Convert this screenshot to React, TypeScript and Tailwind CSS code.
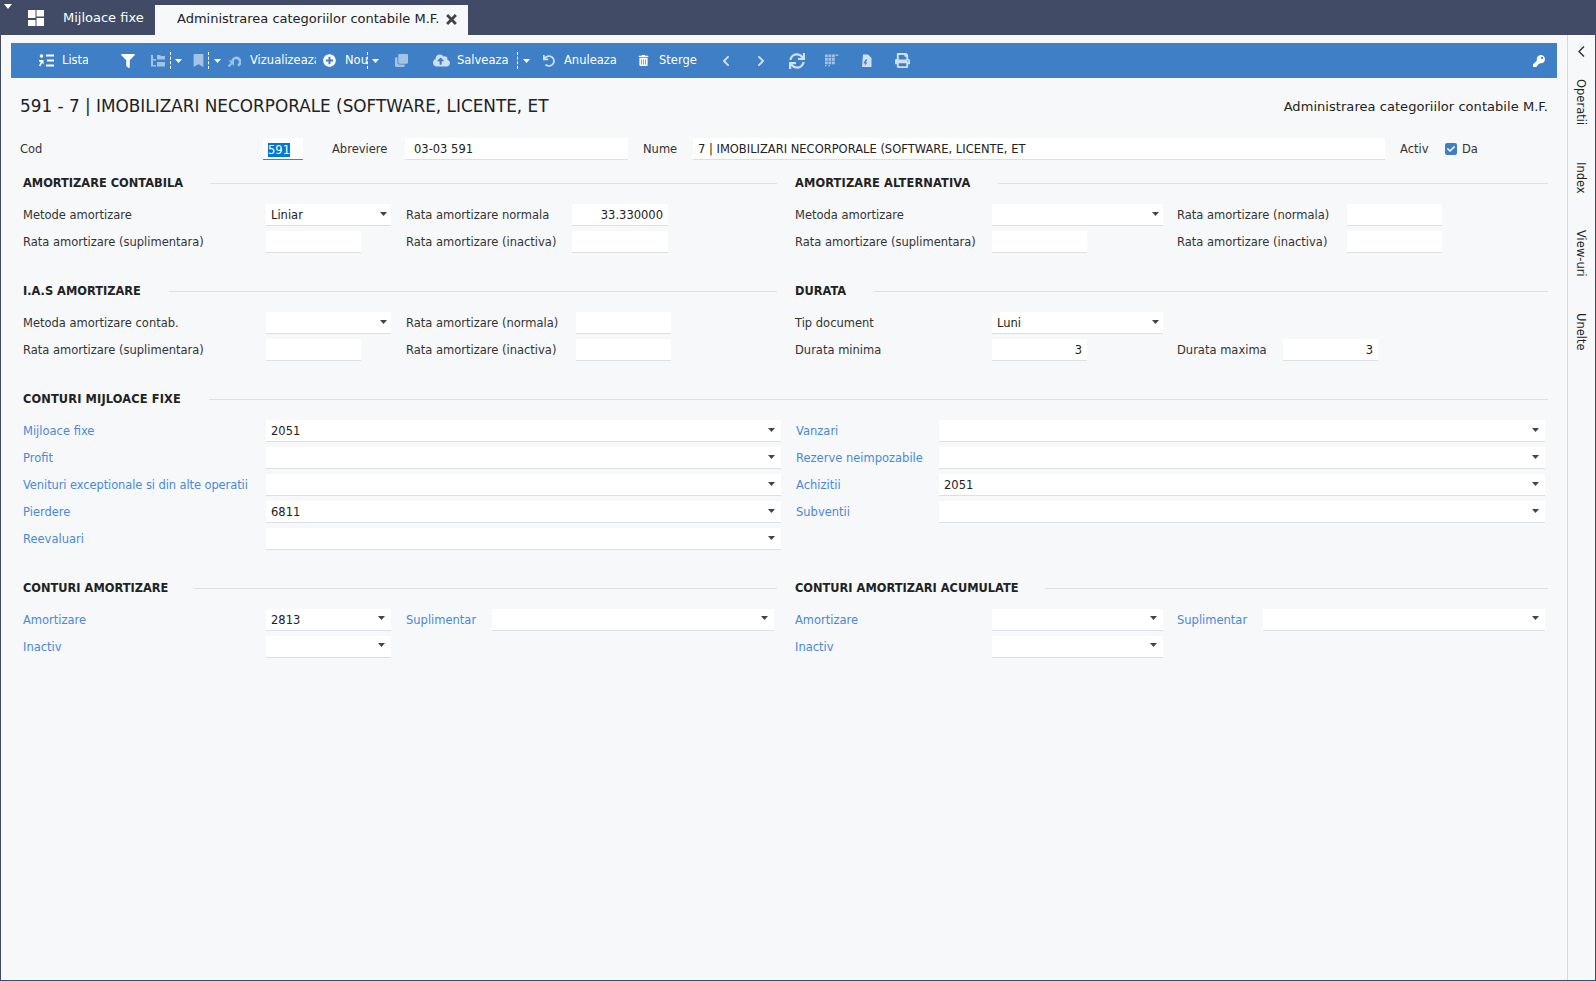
import React from "react";
import { FaFilter, FaBookmark, FaPlusCircle, FaClone, FaCloudUploadAlt, FaUndo, FaTrashAlt, FaChevronLeft, FaChevronRight, FaSync, FaPrint, FaKey, FaCheck } from "react-icons/fa";

const Caret = ({ className = "" }: { className?: string }) => (
  <svg width="7" height="4" viewBox="0 0 7 4" className={className}><path d="M0 0h7L3.5 4z" fill="currentColor" /></svg>
);

const Dash = () => <span className="h-[17px] w-0 border-l border-dashed border-white" />;

const TreeIcon = () => (
  <svg width="14" height="14" viewBox="0 0 14 14" fill="currentColor">
    <path d="M0 1h2v4h3v1.500H2v4.500h3v1.500H0z" />
    <path d="M6 1h3l1 1h4v3.500H6zM6 8h8v4.500H6z" />
  </svg>
);

const ListaIcon = () => (
  <svg width="15" height="13" viewBox="0 0 15 13" fill="currentColor">
    <circle cx="2.500" cy="2" r="1.800" />
    <rect x="7" y="0.500" width="8" height="2" />
    <rect x="8" y="5.500" width="7" height="2" />
    <rect x="7" y="10.500" width="8" height="2" />
    <path d="M0 6h4.500v4.500L3 9l-1.700 3.500L0 11.500 1.800 8 0 7.500z" />
  </svg>
);

const ShareIcon = () => (
  <svg width="13" height="13" viewBox="0 0 13 13" fill="none" stroke="currentColor">
    <path d="M4.500 6.500a4 4 0 1 1 5.500 5" strokeWidth="2.600" />
    <path d="M0.500 6.500h5.500v5.500z" fill="currentColor" stroke="none" />
    <path d="M0.500 12.500l3-3" strokeWidth="2" />
  </svg>
);

const GridIcon = () => (
  <svg width="14" height="13" viewBox="0 0 14 13" fill="currentColor">
    {[0, 3.500, 7].map((x) => [0.500, 4, 7.500].map((y) => <rect key={`${x}-${y}`} x={x} y={y} width="2.800" height="2.800" />))}
    <rect x="10.500" y="0.500" width="2.800" height="1.400" />
    <rect x="0" y="11" width="1.500" height="1.400" />
    <rect x="3.500" y="11" width="1.500" height="1.400" />
  </svg>
);

const FileIcon = () => (
  <svg width="11" height="14" viewBox="0 0 11 14" fill="currentColor">
    <path fillRule="evenodd" d="M2 0.500h5l3.500 3.500v9H1zM4.500 5.500 2.500 9.500h2l-1 2.500 3-3.500h-2l2-3z" />
  </svg>
);

const TabIcon = () => (
  <svg width="16" height="16" viewBox="0 0 16 16" fill="currentColor">
    <rect x="0" y="0" width="7.500" height="8" />
    <rect x="8.500" y="0" width="7.500" height="6.500" />
    <rect x="0" y="10" width="7.500" height="6" />
    <rect x="8.500" y="8" width="7.500" height="8" />
  </svg>
);

const Btn = ({ label, w, ml }: { label: string; w: string; ml: string }) => (
  <span className={`${ml} ${w} overflow-hidden whitespace-nowrap text-white`}>{label}</span>
);

const Toolbar = () => (
  <div className="mx-[10px] flex h-[35px] shrink-0 items-center bg-[#3f7fc5] text-[11.500px] text-white">
    <span className="ml-[28px] flex text-white"><ListaIcon /></span>
    <Btn label="Lista" w="w-[26px]" ml="ml-[8px]" />
    <FaFilter className="ml-[33px] text-white" size={14} />
    <span className="ml-[16px] flex text-[#a3c3e6]"><TreeIcon /></span>
    <span className="ml-[5px] flex"><Dash /></span>
    <Caret className="ml-[4px] text-white" />
    <FaBookmark className="ml-[10px] text-[#a3c3e6]" size={13} />
    <span className="ml-[3px] flex"><Dash /></span>
    <Caret className="ml-[5px] text-white" />
    <span className="ml-[7px] flex text-[#a3c3e6]"><ShareIcon /></span>
    <Btn label="Vizualizeaza" w="w-[66px]" ml="ml-[9px]" />
    <FaPlusCircle className="ml-[7px] text-white" size={13} />
    <Btn label="Nou" w="w-[22px]" ml="ml-[9px]" />
    <Dash />
    <Caret className="ml-[4px] text-white" />
    <FaClone className="ml-[16px] text-[#a3c3e6]" size={13} />
    <FaCloudUploadAlt className="ml-[25px] text-[#cfe0f2]" size={17} />
    <Btn label="Salveaza" w="w-[51px]" ml="ml-[7px]" />
    <span className="ml-[9px] flex"><Dash /></span>
    <Caret className="ml-[5px] text-white" />
    <FaUndo className="ml-[13px] text-[#cfe0f2]" size={12} />
    <Btn label="Anuleaza" w="w-[53px]" ml="ml-[9px]" />
    <FaTrashAlt className="ml-[21px] text-white" size={11} />
    <Btn label="Sterge" w="w-[39px]" ml="ml-[10px]" />
    <FaChevronLeft className="ml-[22px] text-[#cfe0f2]" size={12} />
    <FaChevronRight className="ml-[23px] text-[#cfe0f2]" size={12} />
    <FaSync className="ml-[22px] text-[#cfe0f2]" size={16} />
    <span className="ml-[20px] flex text-[#a3c3e6]"><GridIcon /></span>
    <span className="ml-[22px] flex text-[#cfe0f2]"><FileIcon /></span>
    <FaPrint className="ml-[23px] text-[#cfe0f2]" size={15} />
    <FaKey className="ml-auto mr-[12px] text-white" size={12} />
  </div>
);

const Heading = ({ title, tw }: { title: string; tw: string }) => (
  <div className="mb-[14px] flex h-[14px] items-center">
    <span className={`${tw} whitespace-nowrap pt-[2px] text-[11.400px] font-bold text-[#222]`}>{title}</span>
    <span className="h-px flex-1 bg-[#dcdfe3]" />
  </div>
);

const Section = ({ title, tw, mb = true, children }: { title: string; tw: string; mb?: boolean; children: React.ReactNode }) => (
  <div className={mb ? "mb-[31px]" : ""}>
    <Heading title={title} tw={tw} />
    <div className="flex flex-col gap-[5px]">{children}</div>
  </div>
);

const Label = ({ text, w, link }: { text: string; w: string; link?: boolean }) => (
  <span className={`${w} shrink-0 whitespace-nowrap pt-[2px] ${link ? "text-[#4a88d6]" : "text-[#333]"}`}>{text}</span>
);

const Input = ({ w, value, right, select, caret = "right-[6px] top-[8px]" }: { w: string; value?: string; right?: boolean; select?: boolean; caret?: string }) => (
  <div className={`${w} relative flex h-[22px] shrink-0 items-center border-b border-[#dcdfe3] bg-white pt-[3px] text-[#222] ${right ? "justify-end pr-[5px]" : "pl-[5px]"}`}>
    {value}
    {select && <Caret className={`absolute ${caret} text-[#444]`} />}
  </div>
);

const Row = ({ children }: { children: React.ReactNode }) => <div className="flex h-[22px] items-center">{children}</div>;

const Vert = ({ text, mt }: { text: string; mt: string }) => (
  <span className={`${mt} -translate-x-px text-[11.500px] text-[#222] [writing-mode:vertical-rl]`}>{text}</span>
);

const C1 = "right-[4px] top-[8px]";
const C2 = "right-[6px] top-[7px]";

export default function App() {
  return (
    <div className="flex h-[981px] w-[1596px] flex-col overflow-hidden border-x border-b border-[#414b66] bg-[#f6f8fa] font-['DejaVu_Sans',sans-serif] text-[11.500px]">
      <div className="relative -mx-px flex h-[35px] shrink-0 items-end bg-[#414b66] text-[13px]">
        <svg width="8" height="5" viewBox="0 0 8 5" className="absolute left-[4px] top-[4px] text-white"><path d="M0 0h8L4 5z" fill="currentColor" /></svg>
        <span className="mb-[9px] ml-[28px] flex text-white"><TabIcon /></span>
        <span className="mb-[8px] ml-[19px] w-[92px] text-white">Mijloace fixe</span>
        <div className="flex h-[30px] w-[313px] items-center bg-[#f6f8fa] pb-[2px] pl-[22px] text-[#222]">
          <span>Administrarea categoriilor contabile M.F.</span>
          <svg width="11" height="11" viewBox="0 0 10 10" className="ml-[7px] text-[#444]"><path d="M1 1l8 8M9 1l-8 8" stroke="currentColor" strokeWidth="2.600" /></svg>
        </div>
      </div>
      <div className="flex min-h-0 flex-1">
        <div className="flex w-[1566px] shrink-0 flex-col pt-[8px]">
          <Toolbar />
          <div className="mt-[18px] flex h-[20px] items-center justify-between pl-[19px] pr-[19px] pt-[2px]">
            <span className="text-[16.850px] text-[#222]">591 - 7 | IMOBILIZARI NECORPORALE (SOFTWARE, LICENTE, ET</span>
            <span className="text-[13px] tracking-[0.05px] text-[#222]">Administrarea categoriilor contabile M.F.</span>
          </div>
          <div className="mb-[16px] ml-[19px] mt-[22px] flex h-[22px] items-center">
            <Label text="Cod" w="w-[243px]" />
            <div className="flex h-[22px] w-[40px] items-center border-b border-[#3f7fc5] bg-white pl-[5px] pt-[3px]">
              <span className="bg-[#0078d7] leading-[14px] text-white">591</span>
            </div>
            <Label text="Abreviere" w="ml-[29px] w-[73px]" />
            <div className="flex h-[22px] w-[223px] items-center border-b border-[#dcdfe3] bg-white pl-[9px] pt-[3px] text-[#222]">03-03 591</div>
            <Label text="Nume" w="ml-[15px] w-[50px]" />
            <div className="flex h-[22px] w-[692px] items-center border-b border-[#dcdfe3] bg-white pl-[5px] pt-[3px] text-[#222]">7 | IMOBILIZARI NECORPORALE (SOFTWARE, LICENTE, ET</div>
            <Label text="Activ" w="ml-[15px] w-[45px]" />
            <span className="flex h-[12px] w-[12px] items-center justify-center rounded-[2px] bg-[#3f7fc5]"><FaCheck size={8} className="text-white" /></span>
            <span className="ml-[5px] pt-[2px] text-[#333]">Da</span>
          </div>
          <div className="grid grid-cols-[754px_753px] gap-x-[18px] pl-[22px]">
            <Section title="AMORTIZARE CONTABILA" tw="w-[187px]">
              <Row><Label text="Metode amortizare" w="w-[243px]" /><div className="w-[140px]"><Input w="w-[125px]" value="Liniar" select caret={C1} /></div><Label text="Rata amortizare normala" w="w-[166px]" /><Input w="w-[96px]" value="33.330000" right /></Row>
              <Row><Label text="Rata amortizare (suplimentara)" w="w-[243px]" /><div className="w-[140px]"><Input w="w-[95px]" /></div><Label text="Rata amortizare (inactiva)" w="w-[166px]" /><Input w="w-[96px]" /></Row>
            </Section>
            <Section title="AMORTIZARE ALTERNATIVA" tw="w-[203px] tracking-[0.13px]">
              <Row><Label text="Metoda amortizare" w="w-[197px]" /><div className="w-[185px]"><Input w="w-[171px]" select caret={C1} /></div><Label text="Rata amortizare (normala)" w="w-[170px]" /><Input w="w-[95px]" /></Row>
              <Row><Label text="Rata amortizare (suplimentara)" w="w-[197px]" /><div className="w-[185px]"><Input w="w-[95px]" /></div><Label text="Rata amortizare (inactiva)" w="w-[170px]" /><Input w="w-[95px]" /></Row>
            </Section>
            <Section title="I.A.S AMORTIZARE" tw="w-[146px]">
              <Row><Label text="Metoda amortizare contab." w="w-[243px]" /><div className="w-[140px]"><Input w="w-[125px]" select caret={C1} /></div><Label text="Rata amortizare (normala)" w="w-[170px]" /><Input w="w-[95px]" /></Row>
              <Row><Label text="Rata amortizare (suplimentara)" w="w-[243px]" /><div className="w-[140px]"><Input w="w-[95px]" /></div><Label text="Rata amortizare (inactiva)" w="w-[170px]" /><Input w="w-[95px]" /></Row>
            </Section>
            <Section title="DURATA" tw="w-[79px]">
              <Row><Label text="Tip document" w="w-[197px]" /><Input w="w-[171px]" value="Luni" select caret={C1} /></Row>
              <Row><Label text="Durata minima" w="w-[197px]" /><div className="w-[185px]"><Input w="w-[95px]" value="3" right /></div><Label text="Durata maxima" w="w-[106px]" /><Input w="w-[95px]" value="3" right /></Row>
            </Section>
            <div className="col-span-2 mb-[31px]">
              <Heading title="CONTURI MIJLOACE FIXE" tw="w-[186px] tracking-[0.13px]" />
              <div className="flex gap-[15px]">
                <div className="flex flex-col gap-[5px]">
                  <Row><Label text="Mijloace fixe" w="w-[243px]" link /><Input w="w-[515px]" value="2051" select /></Row>
                  <Row><Label text="Profit" w="w-[243px]" link /><Input w="w-[515px]" select /></Row>
                  <Row><Label text="Venituri exceptionale si din alte operatii" w="w-[243px] tracking-[-0.1px]" link /><Input w="w-[515px]" select /></Row>
                  <Row><Label text="Pierdere" w="w-[243px]" link /><Input w="w-[515px]" value="6811" select /></Row>
                  <Row><Label text="Reevaluari" w="w-[243px]" link /><Input w="w-[515px]" select /></Row>
                </div>
                <div className="flex flex-col gap-[5px]">
                  <Row><Label text="Vanzari" w="w-[143px]" link /><Input w="w-[606px]" select /></Row>
                  <Row><Label text="Rezerve neimpozabile" w="w-[143px]" link /><Input w="w-[606px]" select /></Row>
                  <Row><Label text="Achizitii" w="w-[143px]" link /><Input w="w-[606px]" value="2051" select /></Row>
                  <Row><Label text="Subventii" w="w-[143px]" link /><Input w="w-[606px]" select /></Row>
                </div>
              </div>
            </div>
            <Section title="CONTURI AMORTIZARE" tw="w-[171px]" mb={false}>
              <Row><Label text="Amortizare" w="w-[243px]" link /><div className="w-[140px]"><Input w="w-[125px]" value="2813" select caret={C2} /></div><Label text="Suplimentar" w="w-[86px]" link /><Input w="w-[282px]" select caret={C2} /></Row>
              <Row><Label text="Inactiv" w="w-[243px]" link /><Input w="w-[125px]" select caret={C2} /></Row>
            </Section>
            <Section title="CONTURI AMORTIZARI ACUMULATE" tw="w-[250px]" mb={false}>
              <Row><Label text="Amortizare" w="w-[197px]" link /><div className="w-[185px]"><Input w="w-[171px]" select caret={C2} /></div><Label text="Suplimentar" w="w-[86px]" link /><Input w="w-[282px]" select caret={C2} /></Row>
              <Row><Label text="Inactiv" w="w-[197px]" link /><Input w="w-[171px]" select caret={C2} /></Row>
            </Section>
          </div>
        </div>
        <div className="flex flex-1 flex-col items-center border-l border-[#d5d8dd]">
          <svg width="7" height="11" viewBox="0 0 7 11" className="mt-[11px] text-[#333]"><path d="M6 0.500 1 5.500l5 5" fill="none" stroke="currentColor" strokeWidth="1.500" /></svg>
          <Vert text="Operatii" mt="mt-[22px]" />
          <Vert text="Index" mt="mt-[37px]" />
          <Vert text="View-uri" mt="mt-[36px]" />
          <Vert text="Unelte" mt="mt-[37px]" />
        </div>
      </div>
    </div>
  );
}
